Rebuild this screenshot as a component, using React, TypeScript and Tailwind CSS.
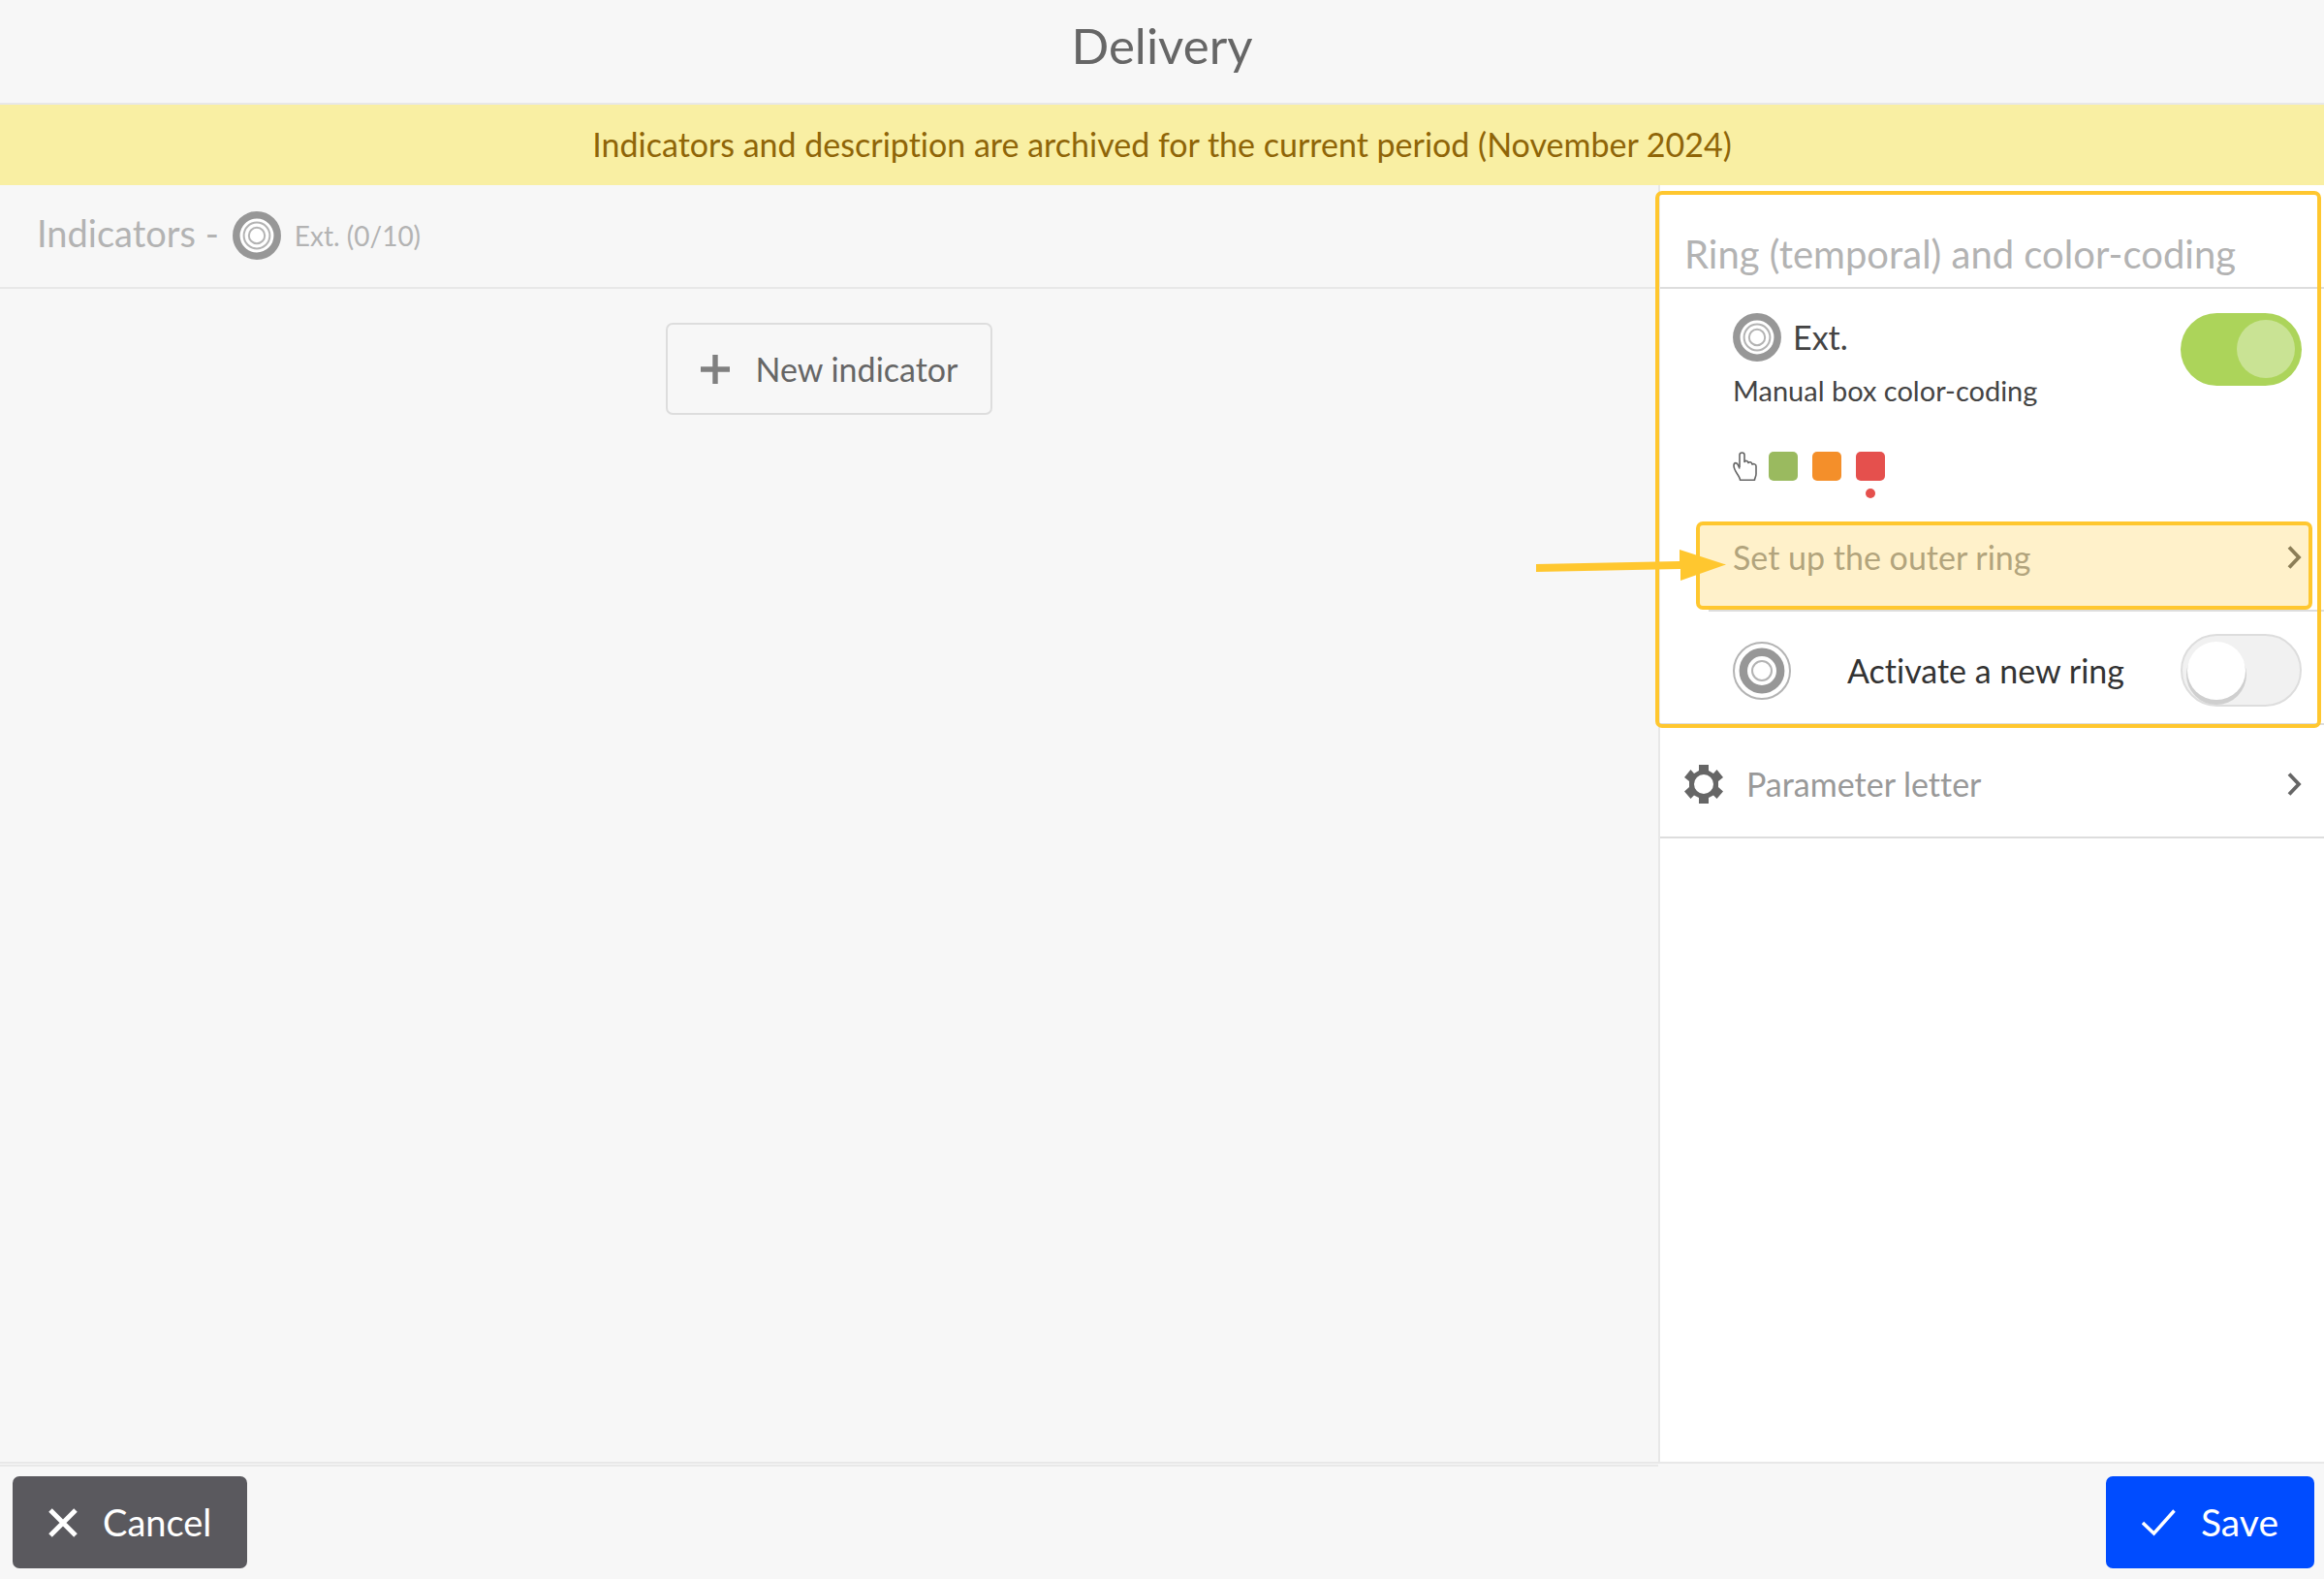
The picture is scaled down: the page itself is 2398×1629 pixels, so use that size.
import { useState } from "react";

function ChevronRight({ className }: { className?: string }) {
  return (
    <svg viewBox="0 0 15 24" className={`h-[24px] w-[15px] shrink-0 ${className ?? ""}`} fill="none" stroke="#666" strokeWidth="3.8" aria-hidden="true">
      <path d="M2 1.5 L12 12 L2 22.5" />
    </svg>
  );
}

function OuterRingIcon() {
  return (
    <svg viewBox="0 0 50 50" className="size-[50px] shrink-0" aria-hidden="true">
      <circle cx="25" cy="25" r="21.2" fill="#fff" stroke="#979797" strokeWidth="7.5" />
      <circle cx="25" cy="25" r="13.4" fill="none" stroke="#b3b3b3" strokeWidth="2" />
      <circle cx="25" cy="25" r="8.2" fill="none" stroke="#b3b3b3" strokeWidth="2" />
    </svg>
  );
}

function MiddleRingIcon() {
  return (
    <svg viewBox="0 0 60 60" className="size-[60px] shrink-0" aria-hidden="true">
      <circle cx="30" cy="30" r="29" fill="#fff" stroke="#b3b3b3" strokeWidth="2" />
      <circle cx="30" cy="30" r="19.2" fill="none" stroke="#979797" strokeWidth="8.4" />
      <circle cx="30" cy="30" r="10" fill="none" stroke="#b3b3b3" strokeWidth="2" />
    </svg>
  );
}

function GearIcon() {
  return (
    <svg viewBox="0 0 40 40" className="size-[40px] shrink-0" fill="#666" aria-hidden="true">
      <path
        fillRule="evenodd"
        d="M15 0 H25 V6 L30 9 L33.5 5 L40 13 L35 17 V23 L40 27.5 L33.5 35 L30 31.5 L25 34 V40 H15 V34 L10 31.5 L6.5 35 L0 27.5 L5 23 V17 L0 13 L6.5 5 L10 9 L15 6 Z M20 10 A10 10 0 1 0 20 30 A10 10 0 1 0 20 10 Z"
      />
    </svg>
  );
}

function HandIcon() {
  return (
    <svg viewBox="0 0 25 30" className="h-[30px] w-[25px] shrink-0" fill="none" stroke="#666" strokeWidth="1.6" strokeLinejoin="round" aria-hidden="true">
      <path d="M7 16 V3.5 C7 0.2 12 0.2 12 3.5 V10.5 C13 8.8 15.5 9 16 11.5 C17 10.2 19.5 10.4 20 13 C21.5 12.2 24 12.8 24 15 V23 C24 26 22.5 27 22.5 29.2 H7.5 C7.5 25.5 1 20 1 14.5 C1 10.5 4.5 11 5.5 14 L7 17.5" />
    </svg>
  );
}

const toggleBase =
  "relative h-[75px] w-[125px] shrink-0 cursor-pointer appearance-none rounded-full before:absolute before:size-[60px] before:rounded-full before:content-['']";
const toggleOff =
  "border-2 border-[#ddd] bg-[#f1f1f1] before:left-[5px] before:top-[6px] before:bg-white before:shadow-[0_4px_0_1px_#cfcfcf]";
const toggleOn = "bg-[#acd45a] before:right-[7px] before:top-[7px] before:bg-[#c9e394]";

function Toggle({ id, label, initial }: { id: string; label: string; initial: boolean }) {
  const [on, setOn] = useState(initial);
  return (
    <input
      id={id}
      type="checkbox"
      role="switch"
      aria-label={label}
      checked={on}
      onChange={(e) => setOn(e.target.checked)}
      className={`${toggleBase} ${on ? toggleOn : toggleOff}`}
    />
  );
}

const swatches = [
  { name: "Green", color: "bg-[#9aba5f] after:bg-[#9aba5f]" },
  { name: "Orange", color: "bg-[#f48f2a] after:bg-[#f48f2a]" },
  { name: "Red", color: "bg-[#e5504d] after:bg-[#e5504d]" },
];

function Swatches() {
  const [picked, setPicked] = useState("Red");
  return (
    <div className="flex items-center gap-[12px]" role="radiogroup" aria-label="Manual box color-coding">
      <HandIcon />
      <div className="flex gap-[15px]">
        {swatches.map((s) => (
          <input
            key={s.name}
            type="radio"
            name="box-color"
            aria-label={s.name}
            checked={picked === s.name}
            onChange={() => setPicked(s.name)}
            className={`relative size-[30px] appearance-none rounded-[5px] after:absolute after:left-[10px] after:top-[38px] after:hidden after:size-[10px] after:rounded-full after:content-[''] checked:after:block ${s.color}`}
          />
        ))}
      </div>
    </div>
  );
}

function PointerArrow() {
  return (
    <svg viewBox="0 0 196 32" className="pointer-events-none absolute left-[-178px] top-[29px] h-[32px] w-[196px]" fill="#ffc72f" aria-hidden="true">
      <path d="M0 15 L148 12 V0 L196 15.5 L149 32 V20 L0 23 Z" />
    </svg>
  );
}

function RingPanel() {
  return (
    <section className="relative border-b-2 border-[#ddd]">
      <h2 className="border-b-2 border-[#ddd] pb-[9px] pl-[25px] pt-[46px] text-[40px] leading-[50px] text-[#b3b3b3]">
        Ring (temporal) and color-coding
      </h2>
      <div className="ml-[50px] border-b-2 border-[#ddd]">
        <div className="flex items-start justify-between pl-[25px] pr-[23px] pt-[25px]">
          <div>
            <label htmlFor="outer-ring" className="flex items-center gap-[12px] text-[34px] leading-[50px] text-[#444]">
              <OuterRingIcon />
              Ext.
            </label>
            <p className="mt-[10px] text-[29px] leading-[40px] text-[#444]">Manual box color-coding</p>
          </div>
          <Toggle id="outer-ring" label="Ext." initial={true} />
        </div>
        <div className="pl-[25px] pt-[43px]">
          <Swatches />
        </div>
        <div className="relative mt-[42px]">
          <button type="button" className="flex w-full items-center justify-between pb-[29px] pl-[25px] pr-[23px] pt-[12px] text-left text-[34px] leading-[50px] text-[#999]">
            Set up the outer ring
            <ChevronRight />
          </button>
          <div className="pointer-events-none absolute bottom-0 left-[-13px] right-[12px] top-0 rounded-[7px] border-4 border-[#ffc72f] bg-[#ffc72c]/25" />
          <PointerArrow />
        </div>
      </div>
      <div className="flex items-center justify-between pb-[17px] pl-[75px] pr-[23px] pt-[23px]">
        <label htmlFor="new-ring" className="flex items-center gap-[58px] text-[34px] leading-[50px] text-[#333]">
          <MiddleRingIcon />
          Activate a new ring
        </label>
        <Toggle id="new-ring" label="Activate a new ring" initial={false} />
      </div>
      <div className="pointer-events-none absolute -bottom-[5px] left-[-5px] right-[3px] top-[6px] rounded-[7px] border-4 border-[#ffc72f]" />
    </section>
  );
}

export default function App() {
  return (
    <div className="flex min-h-screen flex-col bg-[#f7f7f7] font-['Lato',sans-serif] [font-variant-ligatures:none]">
      <header className="border-b-2 border-[#e8e8e8] pb-[24px] pt-[12px] text-center">
        <h1 className="text-[51px] leading-[70px] text-[#666]">Delivery</h1>
      </header>
      <p className="bg-[#f9efa3] pb-[17px] pt-[16px] text-center text-[34px] leading-[50px] text-[#8f6508]">
        Indicators and description are archived for the current period (November 2024)
      </p>
      <div className="flex grow">
        <main className="mb-[-5px] flex min-w-0 flex-1 flex-col border-b-2 border-[#e8e8e8]">
          <div className="flex items-center gap-[14px] border-b-2 border-[#e8e8e8] pb-[28px] pl-[38px] pt-[27px] text-[#b3b3b3]">
            <h2 className="pb-[6px] text-[38px] leading-[44px]">Indicators -</h2>
            <OuterRingIcon />
            <span className="text-[28px] leading-[50px]">Ext. (0/10)</span>
          </div>
          <div className="flex justify-center pt-[35px]">
            <button type="button" className="flex items-center gap-[27px] rounded-[7px] border-2 border-[#ddd] px-[34px] py-[20px] text-[34px] leading-[51px] text-[#666]">
              <svg viewBox="0 0 30 30" className="size-[30px]" stroke="#808080" strokeWidth="5.4" aria-hidden="true">
                <path d="M0 15 H30 M15 0 V30" />
              </svg>
              New indicator
            </button>
          </div>
        </main>
        <aside className="w-[687px] shrink-0 border-l-2 border-[#e8e8e8] bg-white">
          <RingPanel />
          <button type="button" className="flex w-full items-center gap-[24px] border-b-2 border-[#ddd] pb-[29px] pl-[25px] pr-[23px] pt-[36px] text-left text-[34px] leading-[50px] text-[#999]">
            <GearIcon />
            Parameter letter
            <ChevronRight className="ml-auto" />
          </button>
        </aside>
      </div>
      <footer className="flex justify-between border-t-2 border-[#e8e8e8] pb-[11px] pl-[13px] pr-[10px] pt-[13px]">
        <button type="button" className="flex items-center gap-[26px] rounded-[7px] bg-[#5a595e] px-[37px] py-[22px] text-[38px] leading-[51px] text-white">
          <svg viewBox="0 0 30 30" className="size-[30px]" stroke="#fff" strokeWidth="5" aria-hidden="true">
            <path d="M2 2 L28 28 M28 2 L2 28" />
          </svg>
          Cancel
        </button>
        <button type="button" className="flex items-center gap-[26px] rounded-[7px] bg-[#004cff] px-[37px] py-[22px] text-[39px] leading-[51px] text-white">
          <svg viewBox="0 0 35 28" className="h-[28px] w-[35px]" fill="none" stroke="#fff" strokeWidth="3.4" aria-hidden="true">
            <path d="M1 14 L12.5 25 L33.5 1.5" />
          </svg>
          Save
        </button>
      </footer>
    </div>
  );
}
